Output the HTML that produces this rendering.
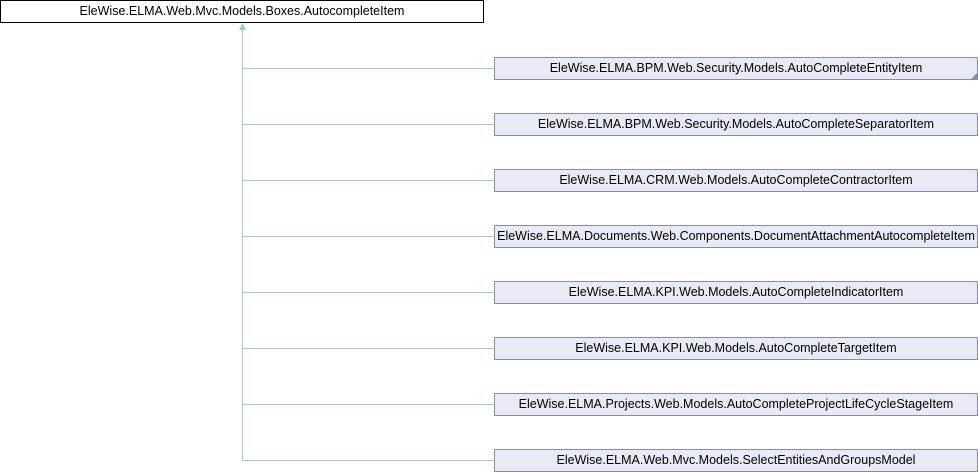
<!DOCTYPE html>
<html><head><style>
body{margin:0;width:978px;height:472px;background:#fff;position:relative;overflow:hidden;font-family:"Liberation Sans",sans-serif;font-size:12.5px;}
.b{position:absolute;box-sizing:border-box;height:23px;line-height:21px;text-align:center;white-space:nowrap;color:#000;}
.r{left:0;top:0;width:484px;border:1px solid #000;background:#fff;}
.c{left:494px;width:484px;border:1px solid #7b8ec6;background:#e8ebf5;}
.h{position:absolute;left:242px;width:252px;height:1px;background:#9ccbe6;}
.v{position:absolute;left:242px;top:28px;width:1px;height:433px;background:#9ccbe6;}
</style></head><body>
<div class="b r">EleWise.ELMA.Web.Mvc.Models.Boxes.AutocompleteItem</div>
<div class="v"></div>
<svg style="position:absolute;left:238px;top:23px" width="9" height="8"><polygon points="4.5,0 8,7 1,7" fill="#9ccbe6"/></svg>
<div class="h" style="top:68px"></div>
<div class="h" style="top:124px"></div>
<div class="h" style="top:180px"></div>
<div class="h" style="top:236px"></div>
<div class="h" style="top:292px"></div>
<div class="h" style="top:348px"></div>
<div class="h" style="top:404px"></div>
<div class="h" style="top:460px"></div>
<div class="b c" style="top:57px">EleWise.ELMA.BPM.Web.Security.Models.AutoCompleteEntityItem<svg style="position:absolute;right:0;bottom:0" width="6" height="6"><polygon points="6,0 6,6 0,6" fill="#7b8ec6"/></svg></div>
<div class="b c" style="top:113px">EleWise.ELMA.BPM.Web.Security.Models.AutoCompleteSeparatorItem</div>
<div class="b c" style="top:169px">EleWise.ELMA.CRM.Web.Models.AutoCompleteContractorItem</div>
<div class="b c" style="top:225px">EleWise.ELMA.Documents.Web.Components.DocumentAttachmentAutocompleteItem</div>
<div class="b c" style="top:281px">EleWise.ELMA.KPI.Web.Models.AutoCompleteIndicatorItem</div>
<div class="b c" style="top:337px">EleWise.ELMA.KPI.Web.Models.AutoCompleteTargetItem</div>
<div class="b c" style="top:393px">EleWise.ELMA.Projects.Web.Models.AutoCompleteProjectLifeCycleStageItem</div>
<div class="b c" style="top:449px">EleWise.ELMA.Web.Mvc.Models.SelectEntitiesAndGroupsModel</div>
</body></html>
